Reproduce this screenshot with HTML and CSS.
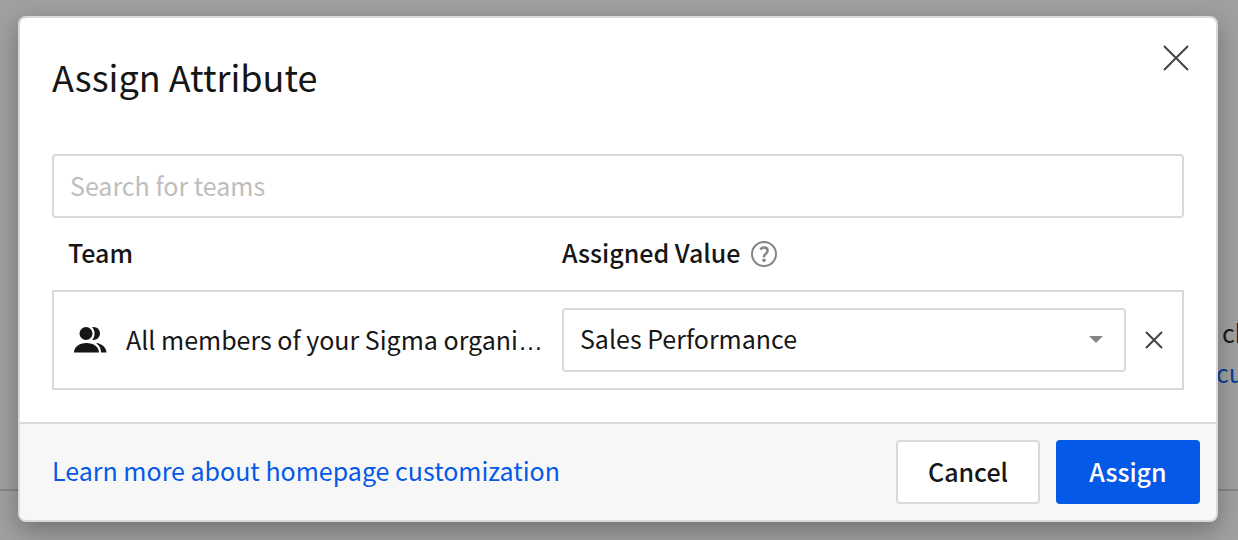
FILE: index.html
```html
<!DOCTYPE html>
<html lang="en">
<head>
<meta charset="utf-8">
<title>Assign Attribute</title>
<link rel="stylesheet" href="styles.css">
</head>
<body>
<div class="backdrop" aria-hidden="true">
  <div class="backdrop-text">
    <span class="backdrop-copy">ch</span>
    <span class="backdrop-link">cu</span>
  </div>
</div>
<main class="modal" role="dialog" aria-labelledby="title">
  <header class="modal-header">
    <h1 class="modal-title" id="title">Assign Attribute</h1>
    <button class="icon-button" type="button" aria-label="Close">
      <svg width="32" height="32" viewBox="0 0 32 32" fill="none" stroke="#444" stroke-width="2"><path d="M4 4l24 24M28 4L4 28"/></svg>
    </button>
  </header>
  <div class="modal-body">
    <input class="search" type="text" placeholder="Search for teams" aria-label="Search for teams">
    <table class="teams">
      <thead>
        <tr>
          <th class="col-team" scope="col"><span class="heading"><span class="heading-text">Team</span></span></th>
          <th class="col-value" scope="col">
            <span class="heading"><span class="heading-text">Assigned Value</span>
              <svg class="help" width="28" height="28" viewBox="0 0 28 28" fill="none" stroke="#858585" stroke-width="2"><circle cx="14" cy="14" r="12"/><path stroke-width="2.500" d="M10.300 9.500C11.300 8.200 12.500 7.500 14 7.500c2.200 0 3.600 1.300 3.600 3.200 0 2.800-3.800 3.200-3.600 6.600"/><circle cx="14" cy="20.300" r="1.800" fill="#858585" stroke="none"/></svg>
            </span>
          </th>
          <td class="col-remove"></td>
        </tr>
      </thead>
      <tbody>
        <tr>
          <td>
            <div class="team">
              <svg class="team-icon" width="36" height="36" viewBox="0 0 36 36" fill="#161616"><circle cx="14" cy="11.500" r="6.500"/><path d="M20.200 5.200C24.600 4.500 28 7.500 28 11.500s-3.400 7-7.800 6.300c3.200-3.500 3.200-9.100 0-12.600zM2 30.500c0-5.500 5.300-9.500 12.500-9.500S27 25 27 30.500zM24 21c5.700.5 10.500 4.500 10.500 9.500H29c0-4-1.700-7.200-5-9.500z"/></svg>
              <div class="team-name"><span class="team-label">All members of your Sigma organization</span></div>
            </div>
          </td>
          <td>
            <div class="select-wrap">
              <select class="select" aria-label="Assigned value"><option>Sales Performance</option></select>
              <svg class="caret" width="14" height="8" viewBox="0 0 14 8" fill="#858585"><path d="M0 0h14L7 7z"/></svg>
            </div>
          </td>
          <td>
            <button class="icon-button remove" type="button" aria-label="Remove team">
              <svg width="24" height="24" viewBox="0 0 24 24" fill="none" stroke="#444" stroke-width="2"><path d="M4 4l16 16M20 4L4 20"/></svg>
            </button>
          </td>
        </tr>
      </tbody>
    </table>
  </div>
  <footer class="modal-footer">
    <a class="learn" href="#">Learn more about homepage customization</a>
    <button class="button" type="button">Cancel</button>
    <button class="button primary" type="button">Assign</button>
  </footer>
</main>
</body>
</html>
```

FILE: styles.css
```css
*, *::before, *::after { box-sizing: border-box; }
body {
  margin: 0;
  padding: 16px 20px 18px 18px;
  background: #a0a0a0;
  color: #161616;
  font: 400 25px/40px "Noto Sans CJK SC", "Noto Sans", sans-serif;
  overflow: hidden;
}
button, input, select { font: inherit; color: inherit; margin: 0; }

.backdrop {
  position: absolute;
  inset: 0 0 49px;
  border-bottom: 2px solid #888;
  display: flex;
  justify-content: flex-end;
  align-items: flex-start;
  overflow: hidden;
}
.backdrop-text {
  display: flex;
  flex-direction: column;
  width: 22px;
  padding-top: 312px;
}
.backdrop-copy { padding-left: 6px; }
.backdrop-link { color: #0a409c; }

.modal {
  position: relative;
  background: #fff;
  border: 2px solid #d9d9d9;
  border-radius: 8px;
  box-shadow: 0 8px 24px rgba(0, 0, 0, .3);
  overflow: hidden;
}
.modal-header {
  display: flex;
  justify-content: space-between;
  align-items: flex-start;
  padding: 24px 24px 54px 32px;
}
.modal-title {
  margin: 0;
  padding-top: 10px;
  font-size: 36px;
  line-height: 48px;
  font-weight: 400;
}
.icon-button {
  display: block;
  padding: 0;
  border: 0;
  background: none;
}
.icon-button svg { display: block; }
.modal-body { padding: 0 32px 32px; }
.search {
  display: block;
  width: 100%;
  height: 64px;
  padding: 0 16px 2px;
  border: 2px solid #d9d9d9;
  border-radius: 4px;
  background: #fff;
}
.search::placeholder { color: #bdbdbd; opacity: 1; }

.teams {
  width: 100%;
  table-layout: fixed;
  border-spacing: 0;
}
.teams th {
  height: 72px;
  padding: 0;
  text-align: left;
  font-weight: 500;
}
.teams .col-team { width: 45.05%; padding-left: 16px; }
.teams .col-remove { width: 58px; }
.heading { display: flex; align-items: center; gap: 10px; }
.heading-text { padding-bottom: 4px; }
.teams tbody td {
  padding: 16px 0;
  border: solid #d9d9d9;
  border-width: 2px 0;
}
.teams tbody td:first-child { border-left-width: 2px; }
.teams tbody td:last-child { border-right-width: 2px; }
.team {
  display: flex;
  align-items: center;
  gap: 18px;
  padding: 0 16px 0 18px;
}
.team-icon { flex: none; }
/* The ellipsis takes the block's font, which sets its dots on the baseline. */
.team-name {
  flex: 1;
  min-width: 0;
  overflow: hidden;
  white-space: nowrap;
  text-overflow: ellipsis;
  font-family: "Liberation Sans", sans-serif;
}
.team-label { font-family: "Noto Sans CJK SC", "Noto Sans", sans-serif; }
.select-wrap { position: relative; }
.select {
  display: block;
  width: 100%;
  height: 64px;
  padding: 0 48px 4px 16px;
  border: 2px solid #d9d9d9;
  border-radius: 4px;
  background: #fff;
  appearance: none;
}
.caret {
  position: absolute;
  right: 23px;
  top: 28px;
  pointer-events: none;
}
.remove { margin: 0 auto; }

.modal-footer {
  display: flex;
  align-items: center;
  gap: 16px;
  padding: 16px 16px 16px 32px;
  border-top: 2px solid #d9d9d9;
  background: #f7f7f7;
}
.learn {
  margin-right: auto;
  padding-bottom: 4px;
  color: #0559e7;
  text-decoration: none;
}
.button {
  width: 144px;
  height: 64px;
  padding: 0 0 2px;
  border: 2px solid #d9d9d9;
  border-radius: 4px;
  background: #fff;
  font-weight: 500;
}
.primary {
  border-color: #0559e7;
  background: #0559e7;
  color: #fff;
}
```
